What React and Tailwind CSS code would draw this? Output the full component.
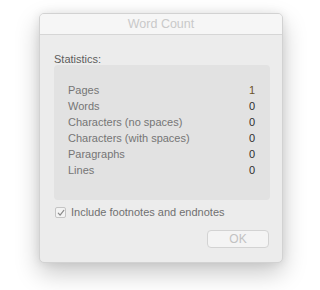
export default function App() {
  const rows = [
    ["Pages", "1"],
    ["Words", "0"],
    ["Characters (no spaces)", "0"],
    ["Characters (with spaces)", "0"],
    ["Paragraphs", "0"],
    ["Lines", "0"],
  ];
  return (
    <div
      className="w-[320px] h-[290px] bg-white pt-[13px] pl-[39px] overflow-hidden"
      style={{ fontFamily: '"Liberation Sans", Arial, sans-serif' }}
    >
      <div className="w-[244px] h-[250px] rounded-[5px] bg-[#ececec] border border-[#d2d2d2] shadow-[0_10px_24px_rgba(0,0,0,0.22),0_0_10px_rgba(0,0,0,0.08)] overflow-hidden flex flex-col">
        <div className="h-[21px] shrink-0 bg-[#f6f6f6] border-b border-[#d6d6d6] flex items-center justify-center">
          <span className="text-[12.5px] text-[#c9c9c9] leading-none">Word Count</span>
        </div>
        <div className="pl-[14px] pr-[13px] pt-[18px]">
          <div className="text-[11px] leading-[13px] text-[#5c5c5c]">Statistics:</div>
          <div className="mt-[-1px] w-[216px] h-[135px] rounded-[4px] bg-[#e2e2e2] pt-[17px] pl-[14px] pr-[15px]">
            {rows.map(([k, v]) => (
              <div key={k} className="flex justify-between h-[16px] items-center text-[11px]">
                <span className="text-[#757575]">{k}</span>
                <span className={v === "1" ? "text-[#6b5228]" : "text-[#2e2e2e]"}>{v}</span>
              </div>
            ))}
          </div>
          <div className="flex items-center mt-[7px] ml-[1px] h-[11px]">
            <div className="w-[11px] h-[11px] rounded-[2px] border border-[#c4c4c4] bg-[#f3f3f3] flex items-center justify-center">
              <svg width="8" height="8" viewBox="0 0 8 8">
                <path d="M1.3 4.2 L3.1 6.2 L6.8 1.3" fill="none" stroke="#8a8a8a" strokeWidth="1.2" strokeLinecap="round" strokeLinejoin="round" />
              </svg>
            </div>
            <span className="ml-[5px] text-[11px] text-[#707070]">Include footnotes and endnotes</span>
          </div>
          <div className="flex justify-end mt-[12px]">
            <div className="w-[62px] h-[18px] rounded-[4px] bg-[#f4f4f4] border border-[#d3d3d3] flex items-center justify-center text-[12px] text-[#c2c2c2]">
              OK
            </div>
          </div>
        </div>
      </div>
    </div>
  );
}
